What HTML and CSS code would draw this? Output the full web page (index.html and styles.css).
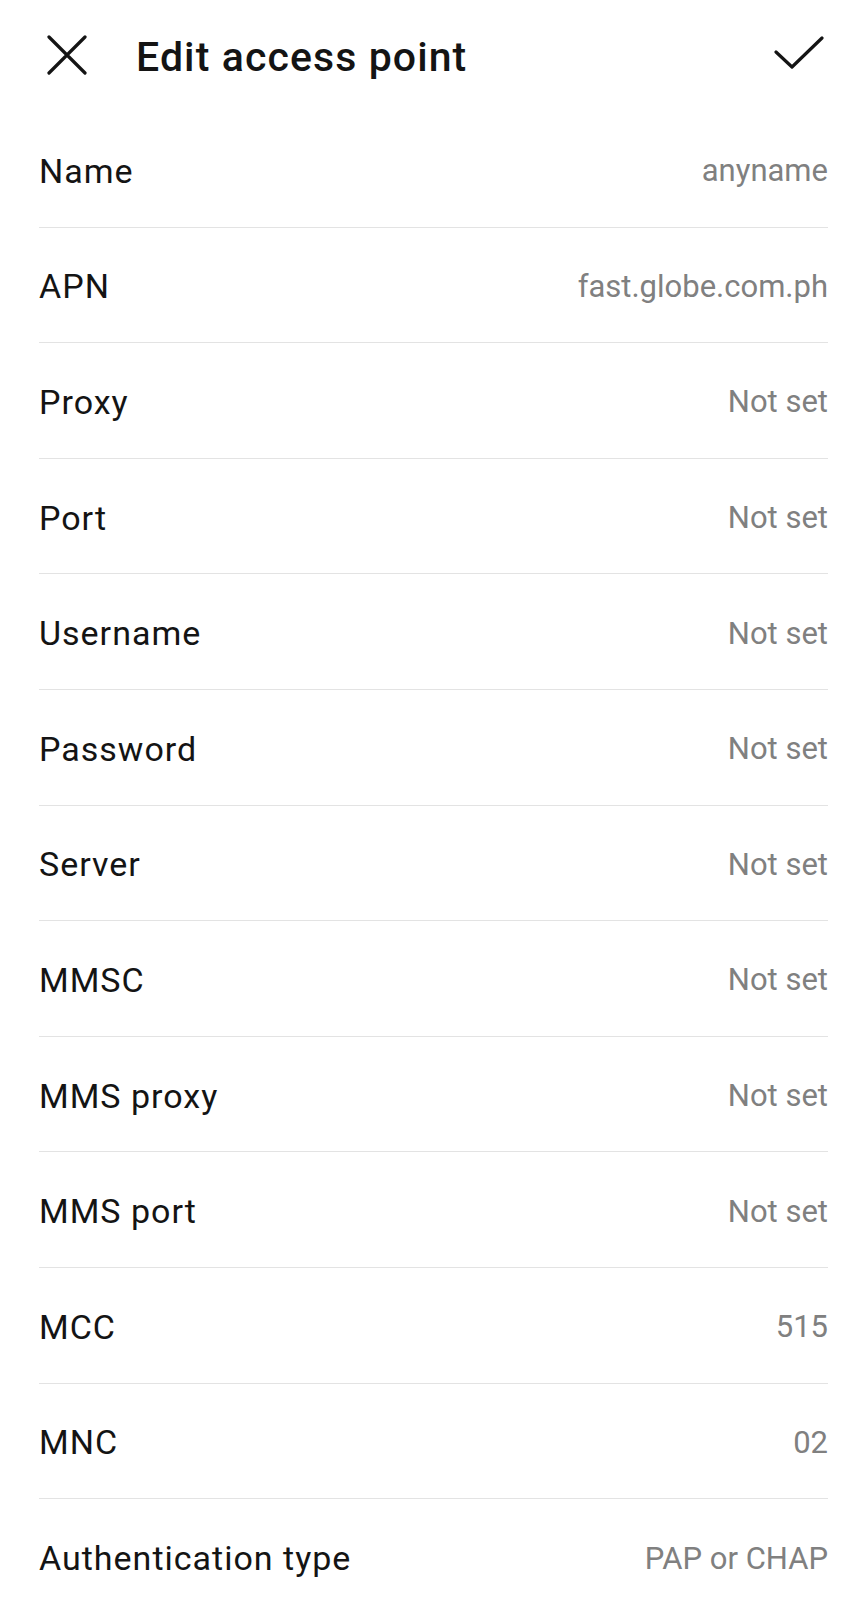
FILE: index.html
```html
<!DOCTYPE html>
<html lang="en">
<head>
  <meta charset="UTF-8" />
  <meta name="viewport" content="width=device-width, initial-scale=1" />
  <title>Edit access point</title>
  <link rel="stylesheet" href="styles.css">
</head>
<body>

  <div class="screen">
    <header class="top-bar">
      <button class="icon-btn close-btn" aria-label="Close">
        <svg viewBox="0 0 40 40" width="40" height="40">
          <path d="M2 2 L38 38 M38 2 L2 38" />
        </svg>
      </button>
      <h1>Edit access point</h1>
      <button class="icon-btn save-btn" aria-label="Save">
        <svg viewBox="0 0 50 34" width="50" height="34">
          <path d="M2 16 L18 31 L48 2" />
        </svg>
      </button>
    </header>

    <ul class="settings">
      <li class="row"><span class="label">Name</span><span class="value">anyname</span></li>
      <li class="row"><span class="label">APN</span><span class="value">fast.globe.com.ph</span></li>
      <li class="row"><span class="label">Proxy</span><span class="value">Not set</span></li>
      <li class="row"><span class="label">Port</span><span class="value">Not set</span></li>
      <li class="row"><span class="label">Username</span><span class="value">Not set</span></li>
      <li class="row"><span class="label">Password</span><span class="value">Not set</span></li>
      <li class="row"><span class="label">Server</span><span class="value">Not set</span></li>
      <li class="row"><span class="label">MMSC</span><span class="value">Not set</span></li>
      <li class="row"><span class="label">MMS proxy</span><span class="value">Not set</span></li>
      <li class="row"><span class="label">MMS port</span><span class="value">Not set</span></li>
      <li class="row"><span class="label">MCC</span><span class="value">515</span></li>
      <li class="row"><span class="label">MNC</span><span class="value">02</span></li>
      <li class="row"><span class="label">Authentication type</span><span class="value">PAP or CHAP</span></li>
    </ul>
  </div>

</body>
</html>
```

FILE: styles.css
```css
:root {
  --text: #141414;
  --muted: #808080;
  --divider: #e3e3e3;
}
body {
  margin: 0;
  background: #ffffff;
  font-family: Roboto, 'Noto Sans', sans-serif;
  color: var(--text);
}
.screen {
  padding: 0 39px;
}
.top-bar {
  height: 112px;
  display: flex;
  align-items: center;
}
.top-bar h1 {
  flex: 1;
  margin: 2px 0 0 49px;
  font-size: 41px;
  font-weight: 500;
  letter-spacing: 1.1px;
}
.icon-btn {
  background: none;
  border: none;
  padding: 0;
  display: flex;
  align-items: center;
  justify-content: center;
}
.icon-btn svg {
  fill: none;
  stroke: var(--text);
  stroke-width: 3.2;
  stroke-linecap: round;
  stroke-linejoin: round;
}
.close-btn {
  margin-left: 8px;
  margin-top: -2px;
}
.save-btn {
  margin-top: -6px;
  margin-right: 4px;
}
.settings {
  list-style: none;
  margin: 0;
  padding: 0;
}
.row {
  height: 115.6px;
  box-sizing: border-box;
  padding-top: 3px;
  display: flex;
  align-items: center;
  justify-content: space-between;
  border-bottom: 1.5px solid var(--divider);
}
.row:last-child {
  border-bottom: none;
}
.label {
  font-size: 34px;
  letter-spacing: 1px;
}
.value {
  font-size: 31px;
  color: var(--muted);
}
```
